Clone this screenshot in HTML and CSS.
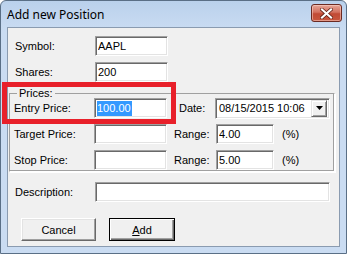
FILE: index.html
```html
<!DOCTYPE html>
<html lang="en">
<head>
    <meta charset="UTF-8">
    <title>Add new Position</title>
    <link rel="stylesheet" href="styles.css">
</head>
<body>
    <div class="window">
        <!-- Title bar -->
        <div class="titlebar">
            <span class="title">Add new Position</span>
            <button type="button" class="close-btn" aria-label="Close">
                <svg width="13" height="11" viewBox="0 0 13 11">
                    <path d="M2 1.5 L11 9.5 M11 1.5 L2 9.5" stroke="#5a1a10" stroke-width="3.6" stroke-linecap="square"/>
                    <path d="M2 1.5 L11 9.5 M11 1.5 L2 9.5" stroke="#ffffff" stroke-width="2.2" stroke-linecap="square"/>
                </svg>
            </button>
        </div>

        <div class="client">
            <div class="row top-row">
                <label class="lbl">Symbol:</label>
                <input type="text" class="edit short" value="AAPL">
            </div>
            <div class="row">
                <label class="lbl">Shares:</label>
                <input type="text" class="edit short" value="200">
            </div>

            <!-- Prices group -->
            <fieldset class="group">
                <legend>Prices:</legend>
                <div class="row first">
                    <label class="lbl">Entry Price:</label>
                    <div class="edit short selected"><span class="sel">100.00</span></div>
                    <label class="date-lbl">Date:</label>
                    <div class="combo">
                        <span class="combo-text">08/15/2015 10:06</span>
                        <span class="combo-btn">
                            <svg width="7" height="4" viewBox="0 0 7 4"><path d="M0 0 H7 L3.5 4 Z" fill="#000"/></svg>
                        </span>
                    </div>
                </div>
                <div class="row">
                    <label class="lbl">Target Price:</label>
                    <input type="text" class="edit short" value="">
                    <label class="lbl2">Range:</label>
                    <input type="text" class="edit range" value="4.00">
                    <span class="pct">(%)</span>
                </div>
                <div class="row">
                    <label class="lbl">Stop Price:</label>
                    <input type="text" class="edit short" value="">
                    <label class="lbl2">Range:</label>
                    <input type="text" class="edit range" value="5.00">
                    <span class="pct">(%)</span>
                </div>
            </fieldset>

            <div class="row desc-row">
                <label class="lbl">Description:</label>
                <input type="text" class="edit long" value="">
            </div>

            <div class="buttons">
                <button type="button" class="btn cancel">Cancel</button>
                <button type="button" class="btn default"><u>A</u>dd</button>
            </div>
        </div>

        <!-- red annotation box -->
        <div class="highlight"></div>
    </div>
</body>
</html>
```

FILE: styles.css
```css
/* Window frame */
body {
    margin: 0;
    padding: 0;
    background-color: #ffffff;
    font-family: "Liberation Sans", Arial, sans-serif;
    font-size: 11px;
    color: #000000;
}

.window {
    position: relative;
    width: 347px;
    height: 254px;
    box-sizing: border-box;
    border: 1px solid #5a6f86;
    border-radius: 6px 6px 0 0;
    background: linear-gradient(#bad1ec, #cadcf2 30px, #cadcf2);
    padding: 0 6px 6px 6px;
    display: flex;
    flex-direction: column;
}

.titlebar {
    height: 26px;
    display: flex;
    align-items: flex-start;
    justify-content: space-between;
}

.title {
    font-family: "Noto Sans", "Open Sans", sans-serif;
    font-size: 12px;
    color: #000000;
    margin-top: 5px;
}

.close-btn {
    width: 31px;
    height: 18px;
    margin-top: 3px;
    margin-right: -2px;
    padding: 0;
    border: 1px solid #6b2a22;
    border-radius: 3px;
    background: linear-gradient(#e5a597, #d3715f 45%, #c14a35 55%, #c8573f);
    box-shadow: inset 0 0 0 1px rgba(255, 220, 210, 0.5);
    display: flex;
    align-items: center;
    justify-content: center;
}

/* Client area */
.client {
    flex: 1;
    background-color: #f0f0f0;
    border: 1px solid #8a9bb0;
    padding: 8px 0 0 7px;
    display: flex;
    flex-direction: column;
}

.row {
    display: flex;
    align-items: center;
    height: 20px;
    margin-top: 6px;
}

.top-row {
    margin-top: 0;
}

.lbl {
    width: 80px;
    flex-shrink: 0;
}

.lbl2 {
    width: 42px;
    margin-left: 7px;
}

.date-lbl {
    width: 36px;
    margin-left: 12px;
}

.edit {
    box-sizing: border-box;
    height: 20px;
    padding: 0 0 0 2px;
    margin: 0;
    border: 1px solid;
    border-color: #a0a0a0 #ffffff #ffffff #a0a0a0;
    box-shadow: inset 1px 1px 0 #696969, inset -1px -1px 0 #e3e3e3;
    background-color: #ffffff;
    font-family: "Liberation Sans", Arial, sans-serif;
    font-size: 11px;
    color: #000000;
    outline: none;
}

.short {
    width: 73px;
}

.range {
    width: 58px;
}

.long {
    width: 235px;
}

.selected {
    display: flex;
    align-items: center;
    padding-left: 2px;
}

.sel {
    background-color: #3399ff;
    color: #ffffff;
    line-height: 15px;
    padding: 0 1px 0 0;
}

.pct {
    margin-left: 8px;
}

/* Prices group box */
.group {
    margin: 6px 4px 0 -6px;
    padding: 0 0 1px 4px;
    border: 1px solid;
    border-color: #a0a0a0 #ffffff #ffffff #a0a0a0;
    box-shadow: inset -1px -1px 0 #a0a0a0, 1px 1px 0 #ffffff;
    min-width: 0;
}

.group legend {
    padding: 0 2px;
    margin-left: 3px;
    line-height: 11px;
}

.group .first {
    margin-top: -1px;
}

/* Date combo box */
.combo {
    box-sizing: border-box;
    width: 115px;
    height: 21px;
    display: flex;
    align-items: center;
    justify-content: space-between;
    border: 1px solid;
    border-color: #a0a0a0 #ffffff #ffffff #a0a0a0;
    box-shadow: inset 1px 1px 0 #696969, inset -1px -1px 0 #e3e3e3;
    background-color: #ffffff;
    padding: 0 2px 0 3px;
}

.combo-btn {
    box-sizing: border-box;
    width: 16px;
    height: 17px;
    background-color: #f0f0f0;
    border: 1px solid;
    border-color: #e3e3e3 #696969 #696969 #e3e3e3;
    box-shadow: inset 1px 1px 0 #ffffff, inset -1px -1px 0 #a0a0a0;
    display: flex;
    align-items: center;
    justify-content: center;
}

.desc-row {
    margin-top: 10px;
}

/* Buttons */
.buttons {
    display: flex;
    gap: 13px;
    margin-top: 16px;
    padding-left: 6px;
}

.btn {
    box-sizing: border-box;
    height: 23px;
    background-color: #f0f0f0;
    border: 1px solid;
    border-color: #ffffff #696969 #696969 #ffffff;
    box-shadow: inset -1px -1px 0 #a0a0a0, inset 1px 1px 0 #e3e3e3;
    font-family: "Liberation Sans", Arial, sans-serif;
    font-size: 11px;
    color: #000000;
    padding: 0;
}

.cancel {
    width: 75px;
}

.default {
    width: 66px;
    border: 1px solid #000000;
    box-shadow: inset 1px 1px 0 #ffffff, inset -1px -1px 0 #696969, inset -2px -2px 0 #a0a0a0;
}

/* annotation overlay */
.highlight {
    position: absolute;
    left: 1px;
    top: 81px;
    width: 174px;
    height: 42px;
    box-sizing: border-box;
    border: 5px solid #e8202a;
    pointer-events: none;
}
```
